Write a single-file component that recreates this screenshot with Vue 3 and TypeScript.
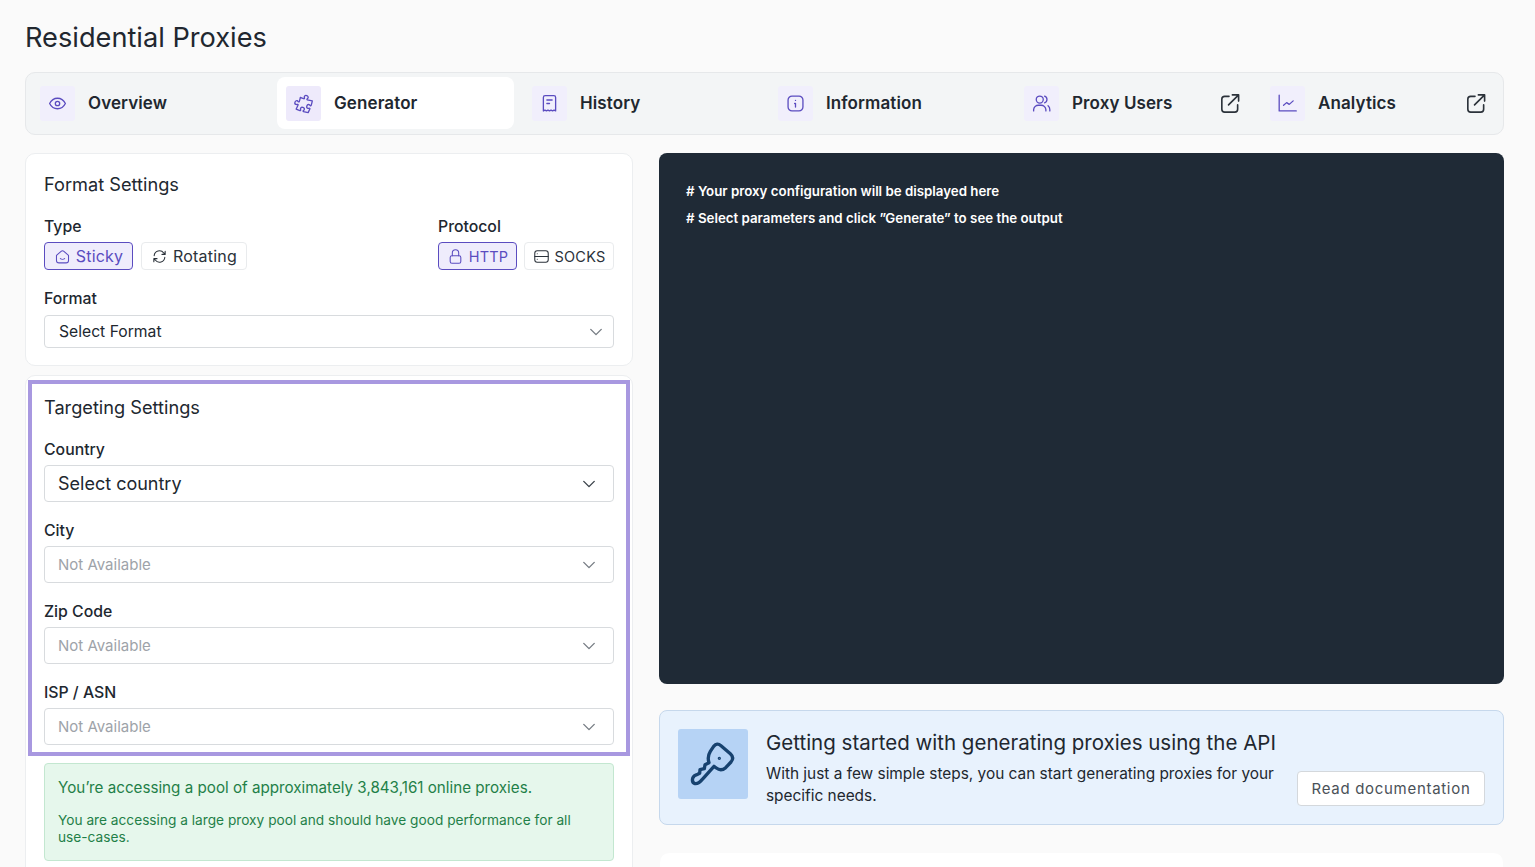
<template>
  <div class="page">
    <h1 class="page-title">Residential Proxies</h1>

    <nav class="tabs">
      <div v-for="tab in tabs" :key="tab.label" class="tab" :class="{ active: tab.active }">
        <span class="tab-icon">
          <svg viewBox="0 0 24 24" class="icon-20">
            <path v-for="d in tab.icon" :key="d" :d="d" />
          </svg>
        </span>
        <span class="tab-label">{{ tab.label }}</span>
        <svg v-if="tab.external" viewBox="0 0 24 24" class="tab-external">
          <path d="M11.5 4.5H7a3 3 0 0 0-3 3V18a3 3 0 0 0 3 3h10.5a3 3 0 0 0 3-3v-4.5" />
          <path d="M11 13.5 21 3.5M15 3h6.5v6.5" />
        </svg>
      </div>
    </nav>

    <div class="columns">
      <div class="left">
        <section class="card format-card">
          <h2 class="card-title">Format Settings</h2>
          <div class="toggles">
            <div>
              <div class="label">Type</div>
              <div class="toggle-row">
                <button class="toggle selected sticky">
                  <svg viewBox="0 0 24 24" class="icon-16">
                    <path d="M3.5 10.5 10 4.7a3 3 0 0 1 4 0l6.500 5.800V17.500a3.500 3.500 0 0 1-3.500 3.500H7A3.500 3.500 0 0 1 3.500 17.500z" />
                    <path d="M9 15c1.500 1.300 4.500 1.300 6 0" />
                  </svg>
                  Sticky
                </button>
                <button class="toggle rotating">
                  <svg viewBox="0 0 24 24" class="icon-16">
                    <path d="M4.500 11a7.500 7.500 0 0 1 13.500-4l2 2M20 4.500V9h-4.500" />
                    <path d="M19.500 13a7.500 7.500 0 0 1-13.500 4l-2-2M4 19.500V15h4.500" />
                  </svg>
                  Rotating
                </button>
              </div>
            </div>
            <div>
              <div class="label">Protocol</div>
              <div class="toggle-row protocol">
                <button class="toggle selected http">
                  <svg viewBox="0 0 24 24" class="icon-16">
                    <path d="M7.500 11V7a4.500 4.500 0 0 1 9 0v4" />
                    <rect x="4.500" y="11" width="15" height="10.500" rx="2.500" />
                  </svg>
                  HTTP
                </button>
                <button class="toggle socks">
                  <svg viewBox="0 0 24 24" class="icon-16">
                    <rect x="2.500" y="4" width="19" height="16" rx="3.500" />
                    <path d="M2.500 12h19M6 8h.01M6 16h.01" />
                  </svg>
                  SOCKS
                </button>
              </div>
            </div>
          </div>
          <div class="label format-label">Format</div>
          <div class="select small">
            <span>Select Format</span>
            <svg viewBox="0 0 24 24" class="chevron"><path d="M5 8.500 12 15.500 19 8.500" /></svg>
          </div>
        </section>

        <section class="card targeting-card">
          <div class="highlight">
            <h2 class="card-title">Targeting Settings</h2>
            <div v-for="field in fields" :key="field.label" class="field">
              <div class="label">{{ field.label }}</div>
              <div class="select" :class="{ disabled: field.disabled }">
                <span>{{ field.value }}</span>
                <svg viewBox="0 0 24 24" class="chevron"><path d="M5 8.500 12 15.500 19 8.500" /></svg>
              </div>
            </div>
          </div>
          <div class="pool">
            <p class="pool-main">You’re accessing a pool of approximately 3,843,161 online proxies.</p>
            <p class="pool-sub">You are accessing a large proxy pool and should have good performance for all use-cases.</p>
          </div>
        </section>
      </div>

      <div class="right">
        <div class="output">
          <p># Your proxy configuration will be displayed here</p>
          <p># Select parameters and click ”Generate” to see the output</p>
        </div>

        <div class="started">
          <div class="started-icon">
            <svg viewBox="0 0 168 168">
              <path d="M76 46 86 31Q96 19 108 29L136 53Q149 65 138 78L122 95Q108 107 94 96L87 91 52 130Q42 144 30 143 20 140 23 127 26 117 38 115L44 112 45 101 58 98 60 86 72 80Q66 62 76 46Z" />
              <circle cx="103" cy="67" r="2" />
            </svg>
          </div>
          <div class="started-text">
            <h3>Getting started with generating proxies using the API</h3>
            <p>With just a few simple steps, you can start generating proxies for your specific needs.</p>
          </div>
          <button class="docs-button">Read documentation</button>
        </div>

        <div class="card bottom-card"></div>
      </div>
    </div>
  </div>
</template>

<script setup lang="ts">
interface Tab {
  label: string
  icon: string[]
  active?: boolean
  external?: boolean
}

const tabs: Tab[] = [
  {
    label: 'Overview',
    icon: [
      'M3 12c2-4 5.200-6 9-6s7 2 9 6c-2 4-5.200 6-9 6s-7-2-9-6z',
      'M12 9.500a2.500 2.500 0 1 0 0 5 2.500 2.500 0 0 0 0-5z',
    ],
  },
  {
    label: 'Generator',
    active: true,
    icon: [
      'M14.250 6.087c0-.355.186-.676.401-.959.221-.29.349-.634.349-1.003 0-1.036-1.007-1.875-2.250-1.875s-2.250.84-2.250 1.875c0 .369.128.713.349 1.003.215.283.401.604.401.959a.64.64 0 0 1-.657.643 48.390 48.390 0 0 1-4.163-.3c.186 1.613.293 3.250.315 4.907a.656.656 0 0 1-.658.663c-.355 0-.676-.186-.959-.401a1.647 1.647 0 0 0-1.003-.349c-1.036 0-1.875 1.007-1.875 2.250s.84 2.250 1.875 2.250c.369 0 .713-.128 1.003-.349.283-.215.604-.401.959-.401.31 0 .555.26.532.57a48.039 48.039 0 0 1-.642 5.056c1.518.19 3.058.309 4.616.354a.64.64 0 0 0 .657-.643c0-.355-.186-.676-.401-.959a1.647 1.647 0 0 1-.349-1.003c0-1.035 1.008-1.875 2.250-1.875 1.243 0 2.250.84 2.250 1.875 0 .369-.128.713-.349 1.003-.215.283-.4.604-.4.959 0 .333.277.599.61.58a48.100 48.100 0 0 0 5.427-.63 48.050 48.050 0 0 0 .582-4.717.532.532 0 0 0-.533-.57c-.355 0-.676.186-.959.401-.29.221-.634.349-1.003.349-1.035 0-1.875-1.007-1.875-2.250s.84-2.250 1.875-2.250c.37 0 .713.128 1.003.349.283.215.604.401.96.401a.656.656 0 0 0 .658-.663 48.422 48.422 0 0 0-.37-5.360c-1.886.342-3.810.574-5.766.689a.578.578 0 0 1-.61-.58z',
    ],
  },
  {
    label: 'History',
    icon: [
      'M5 20.500V5a2 2 0 0 1 2-2h10a2 2 0 0 1 2 2v15.500l-1.750-1-1.750 1-1.750-1-1.750 1-1.750-1-1.750 1-1.750-1z',
      'M9 8h6M9 12h3',
    ],
  },
  {
    label: 'Information',
    icon: [
      'M8 3.500h8a4.500 4.500 0 0 1 4.500 4.500v8a4.500 4.500 0 0 1-4.500 4.500H8A4.500 4.500 0 0 1 3.500 16V8A4.500 4.500 0 0 1 8 3.500z',
      'M12 8.500h.01M11 12h1v4',
    ],
  },
  {
    label: 'Proxy Users',
    external: true,
    icon: [
      'M10 3.500a4 4 0 1 0 0 8 4 4 0 0 0 0-8z',
      'M3 20.500v-1.500a5.500 5.500 0 0 1 5.500-5h3a5.500 5.500 0 0 1 5.500 5v1.500',
      'M15.500 3.700a4 4 0 0 1 0 7.600M19.500 14.500a5.500 5.500 0 0 1 2 4.500v1.500',
    ],
  },
  {
    label: 'Analytics',
    external: true,
    icon: ['M2.500 2.500V20.500H22', 'M7.500 14l3.500-3 3 2 4.500-4'],
  },
]

const fields = [
  { label: 'Country', value: 'Select country', disabled: false },
  { label: 'City', value: 'Not Available', disabled: true },
  { label: 'Zip Code', value: 'Not Available', disabled: true },
  { label: 'ISP / ASN', value: 'Not Available', disabled: true },
]
</script>

<style>
html,
body {
  margin: 0;
  height: 867px;
  overflow: hidden;
  background: #fafafa;
}
</style>

<style scoped>
.page {
  height: 867px;
  overflow: hidden;
  box-sizing: border-box;
  padding: 0 31px 0 25px;
  font-family: Inter, "Noto Sans", sans-serif;
  color: #21272f;
}

.page-title {
  margin: 0;
  padding-top: 22px;
  height: 72px;
  box-sizing: border-box;
  font-size: 27.200px;
  line-height: 32px;
  font-weight: 400;
}

.tabs {
  display: grid;
  grid-template-columns: repeat(6, 1fr);
  gap: 9px;
  height: 63px;
  box-sizing: border-box;
  padding: 4px 5px;
  background: #f3f5f6;
  border: 1px solid #e6e8ea;
  border-radius: 10px;
}

.tab {
  display: flex;
  align-items: center;
  padding: 0 11px 0 9px;
  border-radius: 8px;
  height: 52px;
}

.tab.active {
  background: #fff;
}

.tab-icon {
  display: flex;
  align-items: center;
  justify-content: center;
  width: 35px;
  height: 35px;
  background: #f1effc;
  border-radius: 3px;
}

.tab.active .tab-icon {
  background: #eeeafb;
}

.tab.active .icon-20 {
  transform: rotate(18deg);
}

.tab svg path {
  fill: none;
  stroke-linecap: round;
  stroke-linejoin: round;
}

.icon-20 {
  width: 21px;
  height: 21px;
  stroke: #5b4cc0;
  stroke-width: 1.5;
}

.tab-label {
  margin-left: 13px;
  font-size: 17px;
  font-weight: 600;
  letter-spacing: 0.1px;
  flex: 1;
}

.tab-external {
  width: 23px;
  height: 23px;
  stroke: #2b323a;
  stroke-width: 1.7;
}

.columns {
  display: grid;
  grid-template-columns: 608px 1fr;
  gap: 26px;
  margin-top: 18px;
}

.left {
  display: flex;
  flex-direction: column;
  gap: 9px;
}

.card {
  background: #fff;
  border: 1px solid #eceef0;
  border-radius: 10px;
  box-sizing: border-box;
}

.format-card {
  height: 213px;
  padding: 18px 18px 0;
}

.card-title {
  margin: 0;
  font-size: 18.200px;
  line-height: 24px;
  font-weight: 400;
}

.toggles {
  display: flex;
  justify-content: space-between;
  margin-top: 21px;
}

.toggles > div:last-child {
  width: 176px;
}

.label {
  font-size: 15.800px;
  line-height: 19px;
  font-weight: 500;
}

.toggle-row {
  display: flex;
  gap: 8px;
  margin-top: 6px;
}

.toggle-row.protocol {
  justify-content: space-between;
  gap: 0;
}

.toggle {
  display: flex;
  align-items: center;
  justify-content: center;
  gap: 5px;
  height: 28px;
  padding: 0;
  box-sizing: border-box;
  background: #fff;
  border: 1px solid #e9ebed;
  border-radius: 4px;
  font-family: inherit;
  font-size: 16px;
  letter-spacing: 0.2px;
  color: #2b323a;
}

.toggle.selected {
  background: #efecfc;
  border-color: #5b4cc0;
  color: #5b4cc0;
}

.sticky {
  width: 89px;
}

.rotating {
  width: 106px;
}

.http {
  width: 79px;
  font-size: 14.500px;
}

.socks {
  width: 90px;
  font-size: 14.500px;
}

.icon-16 {
  width: 17px;
  height: 17px;
  fill: none;
  stroke: currentColor;
  stroke-width: 1.5;
  stroke-linecap: round;
  stroke-linejoin: round;
}

.format-label {
  margin-top: 19px;
}

.select {
  display: flex;
  align-items: center;
  justify-content: space-between;
  height: 37px;
  margin-top: 6px;
  padding: 0 15px 0 13px;
  background: #fff;
  border: 1px solid #d8dbde;
  border-radius: 4px;
  box-sizing: border-box;
  font-size: 18px;
}

.select.small {
  height: 33px;
  margin-top: 7px;
  padding: 0 8px 0 14px;
  font-size: 15.700px;
}

.select.disabled {
  color: #9ea3a9;
  font-size: 15px;
}

.chevron {
  width: 18px;
  height: 18px;
  fill: none;
  stroke: #3a4149;
  stroke-width: 1.8;
  stroke-linecap: round;
  stroke-linejoin: round;
}

.select.small .chevron,
.select.disabled .chevron {
  stroke: #767c83;
}

.targeting-card {
  height: 520px;
  padding: 4px 2px 0;
}

.highlight {
  height: 376px;
  box-sizing: border-box;
  padding: 11px 12px 0;
  border: 4px solid #a898e0;
}

.field {
  margin-top: 19px;
}

.field:first-of-type {
  margin-top: 21px;
}

.pool {
  margin: 7px 16px 0;
  height: 98px;
  box-sizing: border-box;
  padding: 14px 13px;
  background: #e6f7ec;
  border: 1px solid #c3e7d0;
  border-radius: 4px;
  color: #1f8048;
}

.pool p {
  margin: 0;
}

.pool-main {
  font-size: 15.200px;
  line-height: 20px;
}

.pool-sub {
  padding-top: 14px;
  font-size: 13.700px;
  line-height: 17px;
}

.right {
  display: flex;
  flex-direction: column;
}

.output {
  height: 531px;
  box-sizing: border-box;
  padding: 25px 27px;
  background: #1f2a36;
  border-radius: 8px;
  color: #fff;
  font-size: 13.300px;
  font-weight: 600;
  line-height: 27px;
}

.output p {
  margin: 0;
}

.started {
  display: flex;
  align-items: flex-start;
  gap: 18px;
  height: 115px;
  margin-top: 26px;
  box-sizing: border-box;
  padding: 18px;
  background: #e8f2fd;
  border: 1px solid #c6d8ec;
  border-radius: 8px;
}

.started-icon {
  display: flex;
  align-items: center;
  justify-content: center;
  flex: none;
  width: 70px;
  height: 70px;
  background: #b6d3f5;
  border-radius: 3px;
}

.started-icon svg {
  width: 56px;
  height: 56px;
  fill: none;
  stroke: #17426f;
  stroke-width: 10;
  stroke-linecap: round;
  stroke-linejoin: round;
}

.started-icon circle {
  stroke-width: 6;
}

.started-text {
  flex: 1;
  min-width: 0;
  margin-top: 1px;
}

.started-text h3 {
  margin: 0;
  font-size: 20.500px;
  line-height: 26px;
  font-weight: 400;
}

.started-text p {
  margin: 7px 0 0;
  font-size: 15.400px;
  line-height: 22px;
}

.docs-button {
  flex: none;
  width: 188px;
  height: 35px;
  margin-top: 42px;
  padding: 0;
  background: #fff;
  border: 1px solid #d4d8dc;
  border-radius: 4px;
  font-family: inherit;
  font-size: 15px;
  letter-spacing: 0.7px;
  color: #4a5158;
}

.bottom-card {
  height: 100px;
  margin-top: 27px;
  border-color: #fafafa;
}
</style>
